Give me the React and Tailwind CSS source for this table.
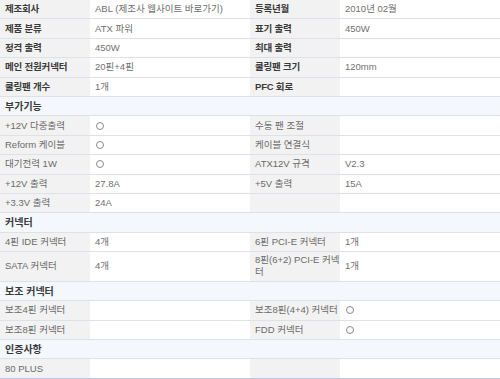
import React from "react";

/**
 * Spec table for a PSU product page
 */
const O = <span className="inline-block w-[8px] h-[8px] rounded-full border border-[#8a8a8a] ml-[1px]" />;

const TOP = [
  ["제조회사", "ABL (제조사 웹사이트 바로가기)", "등록년월", "2010년 02월"],
  ["제품 분류", "ATX 파워", "표기 출력", "450W"],
  ["정격 출력", "450W", "최대 출력", ""],
  ["메인 전원커넥터", "20핀+4핀", "쿨링팬 크기", "120mm"],
  ["쿨링팬 개수", "1개", "PFC 회로", ""],
];

const SECTIONS = [
  {
    title: "부가기능",
    rows: [
      ["+12V 다중출력", O, "수동 팬 조절", ""],
      ["Reform 케이블", O, "케이블 연결식", ""],
      ["대기전력 1W", O, "ATX12V 규격", "V2.3"],
      ["+12V 출력", "27.8A", "+5V 출력", "15A"],
      ["+3.3V 출력", "24A", "", ""],
    ],
  },
  {
    title: "커넥터",
    rows: [
      ["4핀 IDE 커넥터", "4개", "6핀 PCI-E 커넥터", "1개"],
      [
        "SATA 커넥터",
        "4개",
        <span className="leading-[12px]">
          8핀(6+2) PCI-E 커넥
          <br />터
        </span>,
        "1개",
        true,
      ],
    ],
  },
  {
    title: "보조 커넥터",
    rows: [
      ["보조4핀 커넥터", "", "보조8핀(4+4) 커넥터", O],
      ["보조8핀 커넥터", "", "FDD 커넥터", O],
    ],
  },
  {
    title: "인증사항",
    rows: [["80 PLUS", "", "", ""]],
  },
];

const Row = ({ cells, bold, tall, last }) => {
  const h = tall ? "h-[29.8px]" : "h-[19.4px]";
  const border = last ? "border-b border-[#c3c6e6]" : "border-b border-[#dde1e8]";
  return (
    <div className={`grid grid-cols-[90px_160px_90px_160px] ${h} ${border}`}>
      {cells.slice(0, 4).map((c, i) => {
        const isLabel = i % 2 === 0;
        return (
          <div
            key={i}
            className={`flex items-center whitespace-nowrap overflow-hidden leading-[12px] pl-[5px] text-[9.5px] ${
              isLabel
                ? `bg-[#f2f2f2] ${
                    bold ? "font-bold text-[#3a3a3a] tracking-[-0.2px]" : "text-[#6a6a6a]"
                  }`
                : "bg-white text-[#707070]"
            }`}
          >
            {c}
          </div>
        );
      })}
    </div>
  );
};

export default function App() {
  return (
    <div
      className="w-[500px] h-[379px] bg-white overflow-hidden"
      style={{ fontFamily: '"Liberation Sans", "Noto Sans CJK KR", sans-serif' }}
    >
      {TOP.map((r, i) => (
        <Row key={i} cells={r} bold />
      ))}
      {SECTIONS.map((s, si) => (
        <React.Fragment key={s.title}>
          <div className="h-[19.4px] border-b border-[#dde1e8] bg-[#f4f7fc] flex items-center pl-[5px] font-bold text-[#3a3a3a] text-[10px]">
            {s.title}
          </div>
          {s.rows.map((r, i) => (
            <Row
              key={i}
              cells={r}
              tall={r[4]}
              last={si === SECTIONS.length - 1 && i === s.rows.length - 1}
            />
          ))}
        </React.Fragment>
      ))}
    </div>
  );
}
